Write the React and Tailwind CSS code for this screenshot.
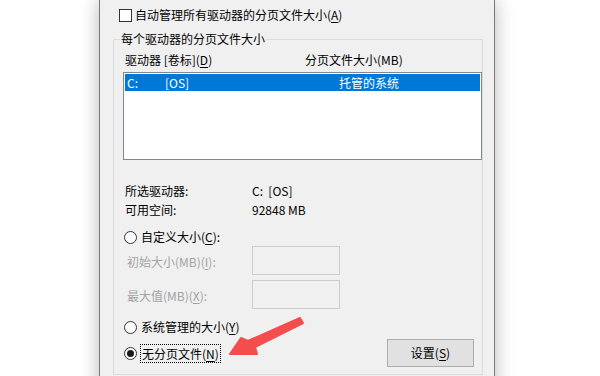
import { useState } from "react";

const font = { fontFamily: '"Noto Sans CJK SC", "Noto Sans", sans-serif' };

function Key({ children }) {
  return <span className="underline underline-offset-2 decoration-1">{children}</span>;
}

function Radio({ checked }) {
  return (
    <span className="grid h-[13px] w-[13px] shrink-0 place-items-center rounded-full border border-[#333] bg-white">
      {checked ? <span className="h-[7px] w-[7px] rounded-full bg-[#1a1a1a]" /> : null}
    </span>
  );
}

function Arrow() {
  return (
    <svg className="pointer-events-none absolute left-[220px] top-[310px]" width="90" height="52" viewBox="0 0 90 52">
      <polygon
        points="10,44 21,28 28,31 80,8 83,13 35,37 37,44"
        fill="#f44d4d"
        stroke="#f44d4d"
        strokeWidth="2"
        strokeLinejoin="round"
      />
    </svg>
  );
}

export default function App() {
  const [mode, setMode] = useState("none");

  return (
    <div className="relative flex h-[376px] w-[600px] overflow-hidden bg-white text-[12px] leading-4 text-black" style={font}>
      <div className="ml-[99px] h-[400px] w-[396px] border-x border-[#7a7a7a] bg-[#f0f0f0] shadow-[0_0_18px_rgba(0,0,0,0.28)]">
        <label className="ml-[19px] mt-[7px] flex h-4 items-center gap-[3px]">
          <span className="h-[13px] w-[13px] border border-[#333] bg-white" />
          <span>自动管理所有驱动器的分页文件大小(<Key>A</Key>)</span>
        </label>

        <fieldset className="ml-[13px] mt-[8px] w-[369px] border border-[#dcdcdc] px-0 pb-[7px]">
          <legend className="ml-[6px] h-4 px-[1px]">每个驱动器的分页文件大小</legend>

          <div className="mt-[5px] flex h-4">
            <span className="ml-[11px] w-[180px]">驱动器 [卷标](<Key>D</Key>)</span>
            <span>分页文件大小(MB)</span>
          </div>

          <div className="ml-[9px] mt-[4px] h-[88px] w-[359px] border border-[#828790] bg-white p-px">
            <div className="flex h-[17px] items-center bg-[#0078d7] text-white">
              <span className="ml-[2px] w-[38px]">C:</span>
              <span className="w-[174px]">[OS]</span>
              <span>托管的系统</span>
            </div>
          </div>

          <div className="mt-[23px] flex h-4">
            <span className="ml-[11px] w-[127px]">所选驱动器:</span>
            <span>C:&nbsp;&nbsp;[OS]</span>
          </div>
          <div className="mt-[3px] flex h-4">
            <span className="ml-[11px] w-[127px]">可用空间:</span>
            <span>92848 MB</span>
          </div>

          <button type="button" onClick={() => setMode("custom")} className="ml-[10px] mt-[11px] flex h-4 items-center gap-[4px]">
            <Radio checked={mode === "custom"} />
            <span>自定义大小(<Key>C</Key>):</span>
          </button>

          <div className="mt-px flex h-[29px] items-center text-[#a3a3a3]">
            <span className="ml-[13px] mt-[3px] w-[125px]">初始大小(MB)(<Key>I</Key>):</span>
            <span className="h-[29px] w-[88px] border border-[#cccccc]" />
          </div>
          <div className="mt-[5px] flex h-[29px] items-center text-[#a3a3a3]">
            <span className="ml-[13px] mt-[3px] w-[125px]">最大值(MB)(<Key>X</Key>):</span>
            <span className="h-[29px] w-[88px] border border-[#cccccc]" />
          </div>

          <button type="button" onClick={() => setMode("system")} className="ml-[10px] mt-[10px] flex h-4 items-center gap-[4px]">
            <Radio checked={mode === "system"} />
            <span>系统管理的大小(<Key>Y</Key>)</span>
          </button>

          <div className="mt-[4px] flex h-[28px] items-center">
            <button type="button" onClick={() => setMode("none")} className="ml-[10px] flex items-center gap-[3px]">
              <Radio checked={mode === "none"} />
              <span className="border border-dotted border-black px-px leading-[17px]">无分页文件(<Key>N</Key>)</span>
            </button>
            <button type="button" className="ml-auto mr-[8px] h-[28px] w-[87px] border border-[#adadad] bg-[#e1e1e1]">
              设置(<Key>S</Key>)
            </button>
          </div>
        </fieldset>
      </div>
      <Arrow />
    </div>
  );
}
